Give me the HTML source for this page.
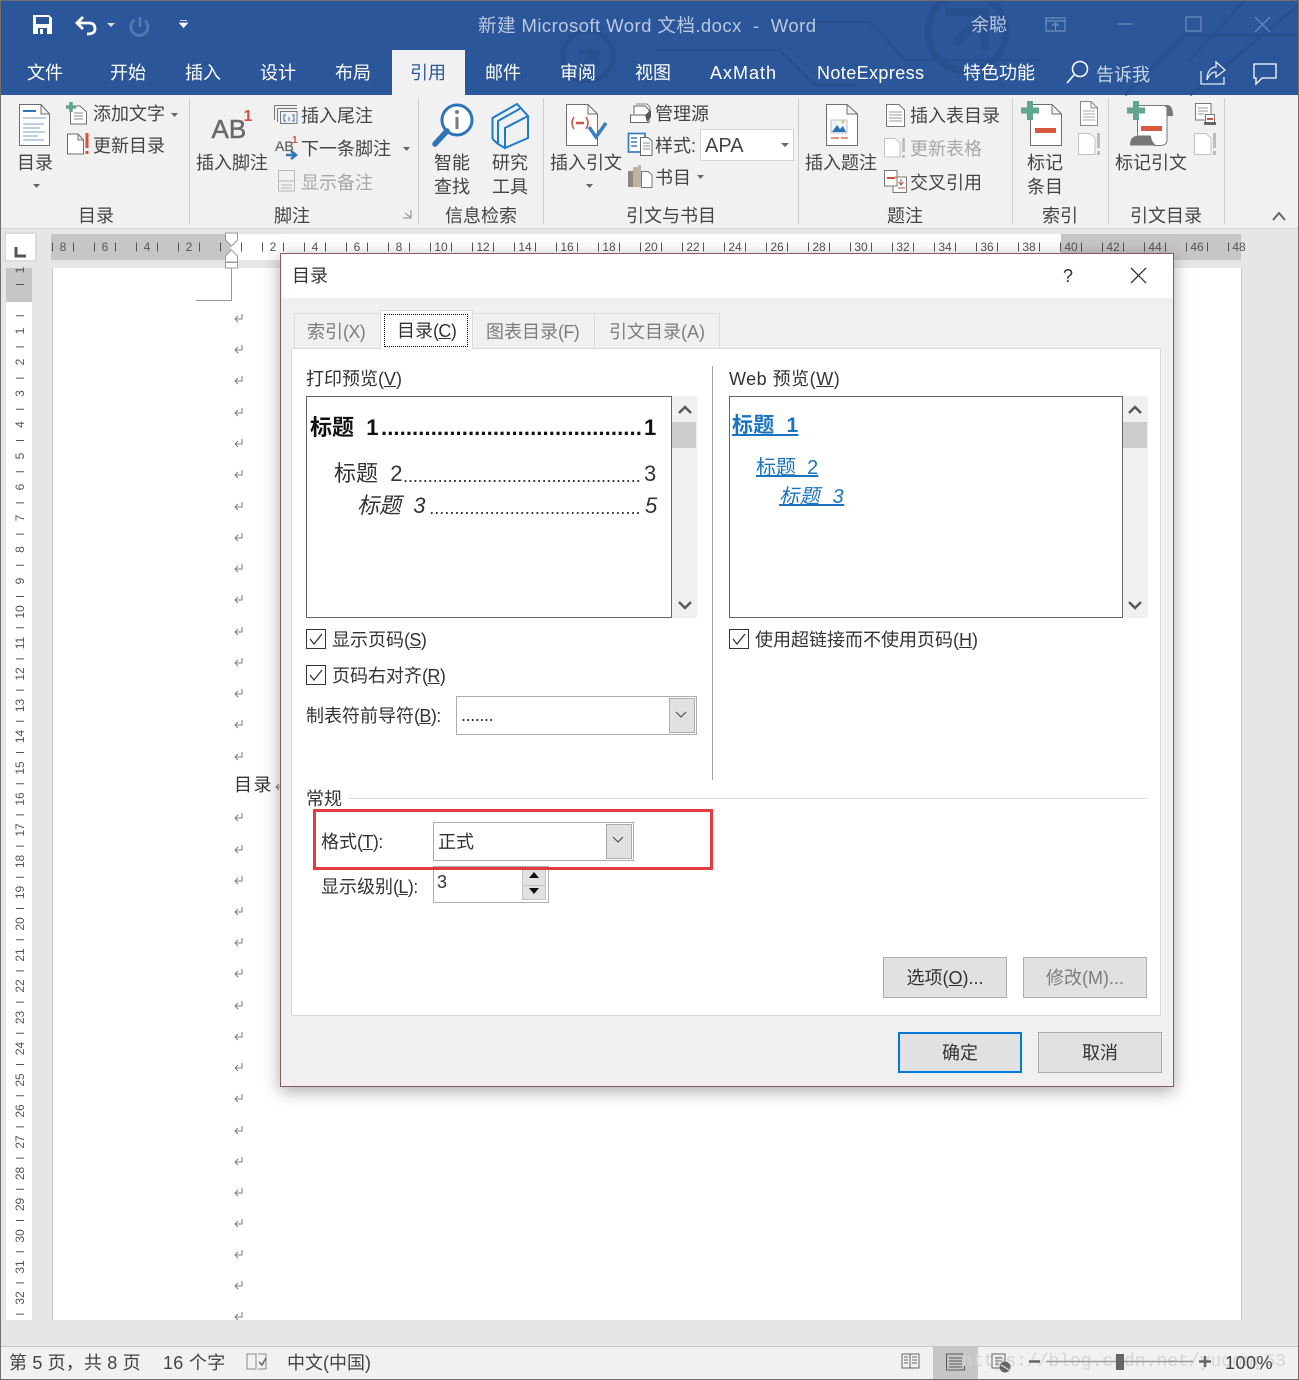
<!DOCTYPE html>
<html lang="zh"><head><meta charset="utf-8"><title>目录</title>
<style>
html,body{margin:0;padding:0}
body{width:1299px;height:1380px;position:relative;overflow:hidden;background:#e6e6e6;font-family:"Liberation Sans","Noto Sans CJK SC",sans-serif;font-size:18px;color:#444}
.a{position:absolute;box-sizing:border-box}
.t{position:absolute;white-space:nowrap;line-height:24px;height:24px}
.w{color:#fff}.g{color:#a8a8a8}
.p{letter-spacing:-.6px}
.btn{position:absolute;box-sizing:border-box;background:#e1e1e1;border:1px solid #adadad;text-align:center;color:#333;line-height:40px}
svg{position:absolute;left:0;top:0;overflow:visible}
svg text{font-family:"Liberation Sans","Noto Sans CJK SC",sans-serif}
</style></head>
<body>
<div class="a" style="left:0;top:0;width:1299px;height:95px;background:#2b579a"></div>
<div class="a" style="left:0;top:95px;width:1299px;height:134px;background:#f1f1f1;border-bottom:1px solid #d2d2d2"></div>
<div class="a" style="left:392px;top:50px;width:73px;height:46px;background:#f1f1f1"></div>
<div class="a" style="left:51px;top:234px;width:1190px;height:26px;background:#fff"></div>
<div class="a" style="left:51px;top:234px;width:180px;height:26px;background:#c6c6c6"></div>
<div class="a" style="left:1061px;top:234px;width:180px;height:26px;background:#c6c6c6"></div>
<div class="a" style="left:4px;top:232px;width:33px;height:30px;background:#fff;border:2px solid #dcdcdc"></div>
<div class="a" style="left:52px;top:268px;width:1190px;height:1052px;background:#fff;border-left:1px solid #c6c6c6;border-right:1px solid #c6c6c6"></div>
<div class="a" style="left:6px;top:268px;width:26px;height:1052px;background:#fff"></div>
<div class="a" style="left:6px;top:268px;width:26px;height:34px;background:#c6c6c6"></div>
<div class="a" style="left:0;top:1346px;width:1299px;height:34px;background:#f1f1f1;border-top:1px solid #c6c6c6"></div>
<div class="a" style="left:933px;top:1347px;width:45px;height:32px;background:#c6c6c6"></div>

<svg width="1299" height="1380" viewBox="0 0 1299 1380">
<defs><path id="rt" d="M7 0V5H0M3 2L0 5 3 8" fill="none" stroke="#808080" stroke-width="1.1"/></defs>
<!-- title circuit decoration -->
<g fill="none" stroke="#28508f" stroke-width="3">
<circle cx="967" cy="32" r="39" stroke-width="7"/>
<circle cx="588" cy="56" r="25" stroke-width="5"/>
<path d="M945 12H985V50M985 14L955 44" stroke-width="8"/>
<path d="M812 22H870L905 60H1040M1125 95L1185 35H1299M1190 95L1299 5M1245 0L1190 60"/>
<path d="M655 50H780L815 85H860" />
<path d="M579 52H597V66M597 52L582 67" stroke-width="5"/>
</g>
<!-- QAT -->
<path d="M33 15H49L52 18V34H33Z" fill="#fff"/><rect x="36" y="17" width="13" height="7" fill="#2b579a"/><rect x="38" y="28" width="9" height="6" fill="#2b579a"/><rect x="40" y="29" width="3" height="5" fill="#fff"/>
<path d="M83 17L77 23 83 29M78 23H89Q95 23 95 29 95 34 87 34" fill="none" stroke="#fff" stroke-width="2.8"/>
<path d="M107 23H115L111 27Z" fill="#d5deec"/>
<path d="M134.500 20A8.500 8.500 0 1 0 145 20.500M140 17V27" fill="none" stroke="#5379b1" stroke-width="2.800"/>
<path d="M180 20.500H187M179.500 23H187.500L183.500 27.500Z" fill="#fff" stroke="#fff" stroke-width=".8"/>
<!-- window controls -->
<g fill="none" stroke="#6f8fbc" stroke-width="1.2">
<path d="M1046 18H1065V31H1046ZM1046 21H1065M1055.500 30V23M1052 26L1055.500 23 1059 26"/>
<path d="M1118 24H1132"/><rect x="1186" y="17" width="15" height="14"/><path d="M1255 17L1270 32M1270 17L1255 32"/>
</g>
<!-- search / share / comment -->
<circle cx="1080" cy="69" r="7.500" fill="none" stroke="#fff" stroke-width="1.5"/><path d="M1074 75L1067 83" stroke="#fff" stroke-width="1.6"/>
<path d="M1201 71V84H1224V77M1207 80C1207 70 1212 67 1216 67V62L1225 70 1216 77V72C1212 72 1209 75 1207 80Z" fill="none" stroke="#e4eaf4" stroke-width="1.3"/>
<path d="M1254 64H1276V78H1262L1256 84V78H1254Z" fill="none" stroke="#fff" stroke-width="1.3"/>
<!-- ribbon dividers -->
<path d="M189.500 98V224M418.500 98V224M543.500 98V224M798.500 98V224M1012.500 98V224M1108.500 98V224M1224.500 98V224" stroke="#cfcfcf"/>
<!-- carets -->
<g fill="#666"><path d="M171 113H178L174.500 117ZM33 184H40L36.500 188ZM403 147H410L406.500 151ZM586 184H593L589.500 188ZM697 175H704L700.500 179Z"/></g>
<path d="M403 218H411V210M405 213L410 217" fill="none" stroke="#8a8a8a"/>
<path d="M1273 220L1279 213 1285 220" fill="none" stroke="#666" stroke-width="2"/>
<!-- 目录 icon -->
<path d="M19.500 104.500H41L49.500 114V145.500H19.500ZM41 104.500V114H49.500" fill="#fff" stroke="#6e6e6e"/>
<path d="M23 111H36" stroke="#2e75b6" stroke-width="2"/>
<path d="M23 118H46M23 124H44M23 128H40M23 132H45M23 136H38M23 140H44" stroke="#7f9fc5" stroke-width="1"/>
<!-- 添加文字 -->
<path d="M70.500 106H80L86.500 112V124H70.500Z" fill="#fff" stroke="#6e6e6e"/>
<path d="M74 113H83M74 116H83M74 119H83" stroke="#888"/>
<path d="M71 102V112M66 107H76" stroke="#5fa58f" stroke-width="3.500"/>
<!-- 更新目录 -->
<path d="M67.500 134H78L83.500 140V154H67.500ZM78 134V140H83.500" fill="#fff" stroke="#6e6e6e"/>
<path d="M87 133V148M87 151V154" stroke="#d2533c" stroke-width="3"/>
<!-- AB1 -->
<text x="211.500" y="138" font-size="26" fill="#6a6a6a" stroke="#6a6a6a" stroke-width=".5">AB</text>
<text x="243.500" y="121" font-size="16" font-weight="700" fill="#d2533c">1</text>
<!-- 尾注 icon -->
<path d="M274.500 105.500H297M274.500 105.500V120M277.500 108.500H297M277.500 108.500V122M280.500 111.500H297V123.500H280.500Z" fill="none" stroke="#777"/>
<path d="M286 115H284V121H286M292 115H294V121H292M289 117V121" fill="none" stroke="#2e75b6"/>
<!-- 下一条脚注 icon -->
<text x="275" y="151" font-size="14" fill="#666" stroke="#666" stroke-width=".3">AB</text>
<text x="292" y="143" font-size="10" font-weight="700" fill="#d2533c">1</text>
<path d="M286 155H295M291 151L296 155 291 159" fill="none" stroke="#2e75b6" stroke-width="2.500"/>
<!-- 备注 icon -->
<path d="M278.500 170.500H294.500V191H278.500ZM278.500 181H294.500M281 185H292M281 188H292" fill="none" stroke="#b8b8b8"/>
<!-- magnifier -->
<circle cx="457" cy="120" r="15" fill="#fff" stroke="#2e75b6" stroke-width="3"/>
<path d="M447 131L435 144" stroke="#2e75b6" stroke-width="5.500" stroke-linecap="round"/>
<path d="M457 117V129" stroke="#7a7a7a" stroke-width="3"/><circle cx="457" cy="112" r="2" fill="#7a7a7a"/>
<!-- book -->
<path d="M492.500 139V118L517 104 528 116V138L505 148V128L528 116M492.500 139L498 144M498 144V121L521 108M505 148L498 144" fill="none" stroke="#1c7ccc" stroke-width="2"/>
<!-- 插入引文 -->
<path d="M566.500 104.500H588L597.500 114V145.500H566.500ZM588 104.500V114H597.500" fill="#fff" stroke="#6e6e6e"/>
<path d="M574 117Q570 123 574 129M586 117Q590 123 586 129" fill="none" stroke="#d2533c" stroke-width="1.500"/><path d="M576 123H584" stroke="#d2533c" stroke-width="2.500"/>
<path d="M589 127L596 137 606 123" fill="none" stroke="#3d7ebf" stroke-width="3.500"/>
<!-- 管理源 -->
<path d="M634 114V106H645L649 110V114" fill="#fff" stroke="#666"/>
<path d="M636 104H647L650 107V112" fill="none" stroke="#888"/>
<path d="M630.500 115H649V122.500H630.500Z" fill="#fff" stroke="#666"/><path d="M645 115L651 110V117L647 122Z" fill="#555"/>
<!-- 样式 -->
<path d="M628.500 133.500H645V152H628.500Z" fill="#fff" stroke="#3d7ebf" stroke-width="1.800"/><path d="M631 138H637M631 142H637M631 146H637" stroke="#3d7ebf" stroke-width="1.500"/>
<path d="M640.500 137.500H648L652 141V155.500H640.500Z" fill="#fff" stroke="#666"/><path d="M643 143H650M643 146H650M643 149H650" stroke="#888"/>
<!-- 书目 icon -->
<rect x="628" y="171" width="5" height="16" fill="#8a8a8a"/><rect x="633" y="167" width="5" height="20" fill="#c9b48a"/><rect x="638" y="165" width="3" height="22" fill="#b5b5b5"/>
<path d="M641.500 171.500H648L652 175V187.500H641.500Z" fill="#fff" stroke="#777"/>
<!-- 插入题注 -->
<path d="M826.500 104.500H847L857.500 114V145.500H826.500ZM847 104.500V114H857.500" fill="#fff" stroke="#6e6e6e"/>
<rect x="831" y="120" width="16" height="13" fill="#eef3f8" stroke="#999" stroke-width=".6"/><path d="M832 132L837 125 840 129 843 126 846 132Z" fill="#2e75b6"/><circle cx="843" cy="122" r="1.500" fill="#e6c65a"/>
<path d="M831 138H839M841 138H848" stroke="#d2533c" stroke-width="1.200"/>
<!-- 插入表目录 -->
<path d="M886.500 104.500H899L904.500 110V126.500H886.500Z" fill="#fff" stroke="#777"/><path d="M889 112H902M889 115H902M889 118H902M889 121H902" stroke="#999"/>
<!-- 更新表格 -->
<path d="M884.500 138.500H895L900 143V157H884.500Z" fill="#fff" stroke="#c2c2c2"/><path d="M903.500 138V152M903.500 155V158" stroke="#bcbcbc" stroke-width="2.800"/>
<!-- 交叉引用 -->
<path d="M884.500 170.500H897V186H884.500ZM895 177H906.500V192.500H893V186" fill="#fff" stroke="#777"/><path d="M887 178H895" stroke="#d2533c" stroke-width="2"/><path d="M901 179V184M898.500 182L901 185 903.500 182M898 188H905" fill="none" stroke="#b5533c"/>
<!-- 标记条目 -->
<path d="M1030.500 104.500H1052L1061.500 114V145.500H1030.500ZM1052 104.500V114H1061.500" fill="#fff" stroke="#6e6e6e"/>
<path d="M1030 101V120M1021 110.500H1039" stroke="#5fa58f" stroke-width="6"/>
<rect x="1035" y="128" width="21" height="5" fill="#d9593f"/>
<path d="M1080.500 101.500H1091L1097.500 108V125.500H1080.500ZM1091 101.500V108H1097.500" fill="#fff" stroke="#8a8a8a"/><path d="M1083 111H1095M1083 114H1095M1083 117H1095M1083 120H1095" stroke="#aaa"/>
<path d="M1078.500 133.500H1090L1095 138V154.500H1078.500Z" fill="#fff" stroke="#c2c2c2"/><path d="M1098.500 133V148M1098.500 151V155" stroke="#bcbcbc" stroke-width="3"/>
<!-- 标记引文 -->
<path d="M1137.500 105.500H1167V140Q1167 145.500 1160 145.500H1155Q1150 145 1150 136H1137.500Z" fill="#fff" stroke="#777"/>
<path d="M1163 105H1168Q1173 106 1173 116H1167V108Z" fill="#777"/>
<path d="M1130 145.500Q1130 136 1137 136H1151Q1151 141 1156 145.500Z" fill="#777"/>
<path d="M1136 101V120M1127 110.500H1145" stroke="#5fa58f" stroke-width="6"/>
<rect x="1141" y="126" width="21" height="5" fill="#d9593f"/>
<path d="M1195.500 103.500H1211V120H1195.500Z" fill="#fff" stroke="#777"/><path d="M1198 108H1208M1198 111H1208M1198 114H1204" stroke="#999"/><rect x="1205.500" y="114.500" width="9" height="8" fill="#fff" stroke="#777"/><path d="M1207 119H1213" stroke="#d2533c" stroke-width="2"/><rect x="1204" y="122" width="12" height="3" fill="#666"/>
<path d="M1194.500 133.500H1206L1211 138V154.500H1194.500Z" fill="#fff" stroke="#c2c2c2"/><path d="M1214.500 133V148M1214.500 151V155" stroke="#bcbcbc" stroke-width="3"/>
<!-- horizontal ruler -->
<line x1="52" y1="247" x2="1232" y2="247" stroke="#555" stroke-width="9" stroke-dasharray="1 20"/>
<g font-size="12" fill="#555" text-anchor="middle">
<text x="63" y="251">8</text><text x="105" y="251">6</text><text x="147" y="251">4</text><text x="189" y="251">2</text>
<text x="273" y="251">2</text><text x="315" y="251">4</text><text x="357" y="251">6</text><text x="399" y="251">8</text><text x="441" y="251">10</text><text x="483" y="251">12</text><text x="525" y="251">14</text><text x="567" y="251">16</text><text x="609" y="251">18</text><text x="651" y="251">20</text><text x="693" y="251">22</text><text x="735" y="251">24</text><text x="777" y="251">26</text><text x="819" y="251">28</text><text x="861" y="251">30</text><text x="903" y="251">32</text><text x="945" y="251">34</text><text x="987" y="251">36</text><text x="1029" y="251">38</text><text x="1071" y="251">40</text><text x="1113" y="251">42</text><text x="1155" y="251">44</text><text x="1197" y="251">46</text><text x="1239" y="251">48</text>
</g>
<path d="M225.500 233H237.500V240L231.500 246 225.500 240ZM231.500 250L237.500 256V262H225.500V256ZM225.500 262.500H237.500V268H225.500Z" fill="#fff" stroke="#999"/>
<path d="M16 247V256H26" fill="none" stroke="#555" stroke-width="3"/>
<!-- margin corner -->
<path d="M231.500 268V300.500H196" fill="none" stroke="#9a9a9a"/>
<!-- vertical ruler -->
<line x1="20" y1="284" x2="20" y2="1320" stroke="#555" stroke-width="8" stroke-dasharray="1 30.2"/>
<g font-size="12" fill="#555" text-anchor="middle">
<text transform="translate(24 270) rotate(-90)">1</text>
<text transform="translate(24 331) rotate(-90)">1</text><text transform="translate(24 362) rotate(-90)">2</text><text transform="translate(24 393.500) rotate(-90)">3</text><text transform="translate(24 424.500) rotate(-90)">4</text><text transform="translate(24 456) rotate(-90)">5</text><text transform="translate(24 487) rotate(-90)">6</text><text transform="translate(24 518) rotate(-90)">7</text><text transform="translate(24 549.500) rotate(-90)">8</text><text transform="translate(24 581) rotate(-90)">9</text><text transform="translate(24 612) rotate(-90)">10</text><text transform="translate(24 643) rotate(-90)">11</text><text transform="translate(24 674) rotate(-90)">12</text><text transform="translate(24 705.500) rotate(-90)">13</text><text transform="translate(24 736.500) rotate(-90)">14</text><text transform="translate(24 768) rotate(-90)">15</text><text transform="translate(24 799) rotate(-90)">16</text><text transform="translate(24 830) rotate(-90)">17</text><text transform="translate(24 861.500) rotate(-90)">18</text><text transform="translate(24 892.500) rotate(-90)">19</text><text transform="translate(24 924) rotate(-90)">20</text><text transform="translate(24 955) rotate(-90)">21</text><text transform="translate(24 986) rotate(-90)">22</text><text transform="translate(24 1017.500) rotate(-90)">23</text><text transform="translate(24 1048.500) rotate(-90)">24</text><text transform="translate(24 1080) rotate(-90)">25</text><text transform="translate(24 1111) rotate(-90)">26</text><text transform="translate(24 1142) rotate(-90)">27</text><text transform="translate(24 1173.500) rotate(-90)">28</text><text transform="translate(24 1204.500) rotate(-90)">29</text><text transform="translate(24 1236) rotate(-90)">30</text><text transform="translate(24 1267) rotate(-90)">31</text><text transform="translate(24 1298) rotate(-90)">32</text>
</g>
<!-- return marks -->
<use href="#rt" x="235" y="314"/><use href="#rt" x="235" y="345"/><use href="#rt" x="235" y="376"/><use href="#rt" x="235" y="408"/><use href="#rt" x="235" y="439"/><use href="#rt" x="235" y="470"/><use href="#rt" x="235" y="502"/><use href="#rt" x="235" y="533"/><use href="#rt" x="235" y="564"/><use href="#rt" x="235" y="595"/><use href="#rt" x="235" y="627"/><use href="#rt" x="235" y="658"/><use href="#rt" x="235" y="689"/><use href="#rt" x="235" y="720"/><use href="#rt" x="235" y="752"/><use href="#rt" x="235" y="813"/><use href="#rt" x="235" y="845"/><use href="#rt" x="235" y="876"/><use href="#rt" x="235" y="907"/><use href="#rt" x="235" y="938"/><use href="#rt" x="235" y="969"/><use href="#rt" x="235" y="1001"/><use href="#rt" x="235" y="1032"/><use href="#rt" x="235" y="1063"/><use href="#rt" x="235" y="1094"/><use href="#rt" x="235" y="1126"/><use href="#rt" x="235" y="1157"/><use href="#rt" x="235" y="1188"/><use href="#rt" x="235" y="1219"/><use href="#rt" x="235" y="1250"/><use href="#rt" x="235" y="1281"/><use href="#rt" x="235" y="1312"/>
<!-- status icons -->
<path d="M247 1354H256V1369H247ZM256 1354V1369M258 1354H266V1369H258" fill="none" stroke="#888"/><path d="M259 1362L262 1365 266 1358" fill="none" stroke="#666" stroke-width="1.500"/>
<path d="M902 1354H910V1368H902ZM910 1354H919V1368H910ZM904 1357H908M904 1360H908M904 1363H908M912 1357H917M912 1360H917M912 1363H917" fill="none" stroke="#666"/>
<path d="M946.500 1354H964.500V1370H946.500ZM949 1358H962M949 1361H962M949 1364H962M949 1367H962" fill="none" stroke="#5a5a5a"/>
<text x="962" y="1366" font-size="18" fill="#d4d4d4" style="font-family:'Liberation Mono',monospace">https://blog.csdn.net/yucong53</text>
<path d="M992 1354H1005V1368H992ZM995 1358H1002M995 1361H1002M995 1364H999" fill="none" stroke="#666"/><circle cx="1005" cy="1367" r="5.500" fill="#666"/><path d="M1001 1365L1006 1368 1009 1370" stroke="#fff"/>
<path d="M1029 1361.500H1040M1199 1361.500H1211M1205 1356V1367" stroke="#666" stroke-width="2.500"/>
<path d="M1046 1361.500H1193" stroke="#999" stroke-width="1.500"/>
<rect x="1116" y="1354" width="8" height="16" fill="#666"/>
</svg>

<!-- title & tabs text -->
<div class="t" style="left:478px;top:14px;color:#b9c8e0;font-size:18.500px;letter-spacing:.45px">新建 Microsoft Word 文档.docx &nbsp;-&nbsp; Word</div>
<div class="t" style="left:971px;top:13px;color:#bccae1">余聪</div>
<div class="t w" style="left:27px;top:61px">文件</div>
<div class="t w" style="left:110px;top:61px">开始</div>
<div class="t w" style="left:185px;top:61px">插入</div>
<div class="t w" style="left:260px;top:61px">设计</div>
<div class="t w" style="left:335px;top:61px">布局</div>
<div class="t" style="left:410px;top:61px;color:#2b579a">引用</div>
<div class="t w" style="left:485px;top:61px">邮件</div>
<div class="t w" style="left:560px;top:61px">审阅</div>
<div class="t w" style="left:635px;top:61px">视图</div>
<div class="t w" style="left:710px;top:61px;letter-spacing:1px">AxMath</div>
<div class="t w" style="left:817px;top:61px;letter-spacing:.4px">NoteExpress</div>
<div class="t w" style="left:963px;top:61px">特色功能</div>
<div class="t" style="left:1096px;top:63px;color:#c9d5e8">告诉我</div>

<!-- ribbon text -->
<div class="t" style="left:93px;top:102px">添加文字</div>
<div class="t" style="left:93px;top:134px">更新目录</div>
<div class="t" style="left:17px;top:151px">目录</div>
<div class="t" style="left:78px;top:204px">目录</div>
<div class="t" style="left:196px;top:151px">插入脚注</div>
<div class="t" style="left:301px;top:104px">插入尾注</div>
<div class="t" style="left:301px;top:137px">下一条脚注</div>
<div class="t g" style="left:301px;top:171px">显示备注</div>
<div class="t" style="left:274px;top:204px">脚注</div>
<div class="t" style="left:434px;top:151px">智能</div>
<div class="t" style="left:434px;top:175px">查找</div>
<div class="t" style="left:492px;top:151px">研究</div>
<div class="t" style="left:492px;top:175px">工具</div>
<div class="t" style="left:445px;top:204px">信息检索</div>
<div class="t" style="left:550px;top:151px">插入引文</div>
<div class="t" style="left:655px;top:102px">管理源</div>
<div class="t" style="left:655px;top:134px">样式:</div>
<div class="a" style="left:700px;top:129px;width:94px;height:32px;background:#fff;border:1px solid #d4d4d4"></div>
<div class="t" style="left:705px;top:134px;font-size:20px">APA</div>
<svg width="1299" height="200"><path d="M781 143H789L785 147Z" fill="#666"/></svg>
<div class="t" style="left:655px;top:166px">书目</div>
<div class="t" style="left:626px;top:204px">引文与书目</div>
<div class="t" style="left:805px;top:151px">插入题注</div>
<div class="t" style="left:910px;top:104px">插入表目录</div>
<div class="t g" style="left:910px;top:137px">更新表格</div>
<div class="t" style="left:910px;top:171px">交叉引用</div>
<div class="t" style="left:887px;top:204px">题注</div>
<div class="t" style="left:1027px;top:151px">标记</div>
<div class="t" style="left:1027px;top:175px">条目</div>
<div class="t" style="left:1042px;top:204px">索引</div>
<div class="t" style="left:1115px;top:151px">标记引文</div>
<div class="t" style="left:1130px;top:204px">引文目录</div>

<!-- doc text -->
<div class="t" style="left:234px;top:773px;color:#333;letter-spacing:1.500px">目录</div>
<svg width="1299" height="800"><path d="M283 782V787H276M279 784L276 787 279 790" fill="none" stroke="#808080"/></svg>

<!-- status -->
<div class="t" style="left:9px;top:1351px;letter-spacing:.16px">第 5 页，共 8 页</div>
<div class="t" style="left:163px;top:1351px;letter-spacing:.3px">16 个字</div>
<div class="t" style="left:287px;top:1351px">中文(中国)</div>
<div class="t" style="left:1225px;top:1351px;letter-spacing:.5px">100%</div>

<!-- outer border -->
<div class="a" style="left:0;top:0;width:1299px;height:1380px;border:1px solid #6f6f6f;pointer-events:none"></div>

<!-- dialog -->
<div class="a" style="left:280px;top:253px;width:894px;height:834px;background:#f0f0f0;border:1px solid #8c5a5a;box-shadow:0 4px 16px rgba(0,0,0,.35)">
 <div class="a" style="left:0;top:0;width:892px;height:44px;background:#fff"></div>
</div>
<div id="dlg2" style="position:absolute;left:0;top:0">
<style>#dlg2 .t{color:#333}#dlg2 .t.d{color:#7d7d7d}</style>
<div class="t" style="left:292px;top:264px">目录</div>
<div class="t" style="left:1063px;top:264px">?</div>
<svg width="1299" height="1380">
<path d="M1131 268L1146 283M1146 268L1131 283" stroke="#333" stroke-width="1.300"/>
</svg>
<!-- tab strip -->
<div class="a" style="left:294px;top:313px;width:87px;height:36px;background:#f0f0f0;border:1px solid #dcdcdc;border-bottom:0"></div>
<div class="a" style="left:472px;top:313px;width:123px;height:36px;background:#f0f0f0;border:1px solid #dcdcdc;border-bottom:0"></div>
<div class="a" style="left:594px;top:313px;width:126px;height:36px;background:#f0f0f0;border:1px solid #dcdcdc;border-bottom:0"></div>
<!-- tab page -->
<div class="a" style="left:291px;top:348px;width:870px;height:668px;background:#fff;border:1px solid #d9d9d9"></div>
<div class="a" style="left:380px;top:310px;width:93px;height:39px;background:#fff;border:1px solid #d9d9d9;border-bottom:0"></div>
<div class="a" style="left:384px;top:314px;width:84px;height:33px;border:1px dotted #000"></div>
<div class="t d" style="left:307px;top:320px">索引<span class="p">(X)</span></div>
<div class="t" style="left:397px;top:319px">目录<span class="p">(<u>C</u>)</span></div>
<div class="t d" style="left:486px;top:320px">图表目录<span class="p">(F)</span></div>
<div class="t d" style="left:609px;top:320px">引文目录(A)</div>

<div class="t" style="left:306px;top:367px">打印预览(<u>V</u>)</div>
<div class="t" style="left:729px;top:367px;letter-spacing:.5px">Web 预览(<u>W</u>)</div>
<div class="a" style="left:712px;top:366px;width:1px;height:414px;background:#a0a0a0"></div>

<div class="a" style="left:306px;top:396px;width:366px;height:222px;background:#fff;border:1px solid #666"></div>
<div class="a" style="left:672px;top:396px;width:25px;height:222px;background:#f0f0f0"></div>
<div class="a" style="left:672px;top:422px;width:24px;height:26px;background:#cdcdcd"></div>
<div class="a" style="left:729px;top:396px;width:394px;height:222px;background:#fff;border:1px solid #666"></div>
<div class="a" style="left:1123px;top:396px;width:25px;height:222px;background:#f0f0f0"></div>
<div class="a" style="left:1123px;top:422px;width:24px;height:26px;background:#cdcdcd"></div>
<svg width="1299" height="1380">
<g fill="none" stroke="#5a5a5a" stroke-width="2.500">
<path d="M679 413L685 407 691 413M679 602L685 608 691 602M1129 413L1135 407 1141 413M1129 602L1135 608 1141 602"/>
</g>
</svg>
<div class="t" style="left:310px;top:416px;font-size:22px;font-weight:700;color:#111">标题&nbsp; 1</div>
<div class="t" style="left:381px;top:416px;font-size:22px;font-weight:700;color:#111;letter-spacing:.1px">..........................................</div>
<div class="t" style="left:644px;top:416px;font-size:22px;font-weight:700;color:#111">1</div>
<div class="t" style="left:334px;top:462px;font-size:22px">标题&nbsp; 2</div>
<div class="t" style="left:403px;top:464px;font-size:18px;letter-spacing:-.05px">................................................</div>
<div class="t" style="left:644px;top:462px;font-size:22px">3</div>
<div class="t" style="left:357px;top:494px;font-size:22px;font-style:italic">标题&nbsp; 3</div>
<div class="t" style="left:430px;top:496px;font-size:18px;font-style:italic;letter-spacing:.03px">..........................................</div>
<div class="t" style="left:645px;top:494px;font-size:22px;font-style:italic">5</div>

<div class="t" style="left:732px;top:414px;font-size:21px;font-weight:700;color:#1a73c0;letter-spacing:.2px"><u>标题&nbsp; 1</u></div>
<div class="t" style="left:756px;top:456px;font-size:20px;color:#1a73c0"><u>标题&nbsp; 2</u></div>
<div class="t" style="left:779px;top:485px;font-size:20px;font-style:italic;color:#1a73c0;letter-spacing:.6px"><u>标题&nbsp; 3</u></div>

<!-- checkboxes -->
<div class="a" style="left:306px;top:629px;width:20px;height:20px;border:1px solid #333;background:#fff"></div>
<div class="a" style="left:306px;top:665px;width:20px;height:20px;border:1px solid #333;background:#fff"></div>
<div class="a" style="left:729px;top:629px;width:20px;height:20px;border:1px solid #333;background:#fff"></div>
<svg width="1299" height="1380"><path d="M310 639L314 644 322 634M310 675L314 680 322 670M733 639L737 644 745 634" fill="none" stroke="#333" stroke-width="1.300"/></svg>
<div class="t" style="left:332px;top:628px">显示页码<span class="p">(<u>S</u>)</span></div>
<div class="t" style="left:332px;top:664px">页码右对齐<span class="p">(<u>R</u>)</span></div>
<div class="t" style="left:755px;top:628px">使用超链接而不使用页码(<u>H</u>)</div>
<div class="t" style="left:306px;top:704px">制表符前导符<span class="p">(<u>B</u>):</span></div>
<div class="a" style="left:456px;top:696px;width:241px;height:39px;background:#fff;border:1px solid #adadad"></div>
<div class="a" style="left:669px;top:698px;width:26px;height:35px;background:#e1e1e1;border:1px solid #adadad"></div>
<div class="t" style="left:461px;top:703px;letter-spacing:-.4px">.......</div>

<div class="a" style="left:348px;top:798px;width:799px;height:1px;background:#d9d9d9"></div>
<div class="t" style="left:306px;top:787px">常规</div>

<div class="t" style="left:321px;top:830px">格式<span class="p">(<u>T</u>):</span></div>
<div class="a" style="left:433px;top:822px;width:201px;height:39px;background:#fff;border:1px solid #adadad"></div>
<div class="a" style="left:606px;top:824px;width:26px;height:35px;background:#e1e1e1;border:1px solid #adadad"></div>
<div class="t" style="left:438px;top:830px">正式</div>

<div class="t" style="left:321px;top:875px">显示级别<span class="p">(<u>L</u>):</span></div>
<div class="a" style="left:433px;top:866px;width:116px;height:37px;background:#fff;border:1px solid #adadad"></div>
<div class="a" style="left:522px;top:869px;width:24px;height:17px;background:#e1e1e1;border:1px solid #c4c4c4"></div>
<div class="a" style="left:522px;top:885px;width:24px;height:15px;background:#e1e1e1;border:1px solid #c4c4c4"></div>
<div class="t" style="left:437px;top:870px">3</div>
<svg width="1299" height="1380">
<path d="M676 712L681 717 686 712M613 837L618 842 623 837" fill="none" stroke="#444" stroke-width="1"/>
<path d="M529 878L534 872 539 878ZM529 888H539L534 894Z" fill="#111"/>
<rect x="314.500" y="810.500" width="397" height="58" fill="none" stroke="#e53b43" stroke-width="3"/>
</svg>

<div class="btn" style="left:883px;top:957px;width:124px;height:41px">选项(<u>O</u>)...</div>
<div class="btn" style="left:1023px;top:957px;width:124px;height:41px;color:#7d7d7d">修改(M)...</div>
<div class="btn" style="left:898px;top:1032px;width:124px;height:41px;border:2px solid #0078d7;line-height:39px">确定</div>
<div class="btn" style="left:1038px;top:1032px;width:124px;height:41px">取消</div>
</div>
</body></html>
